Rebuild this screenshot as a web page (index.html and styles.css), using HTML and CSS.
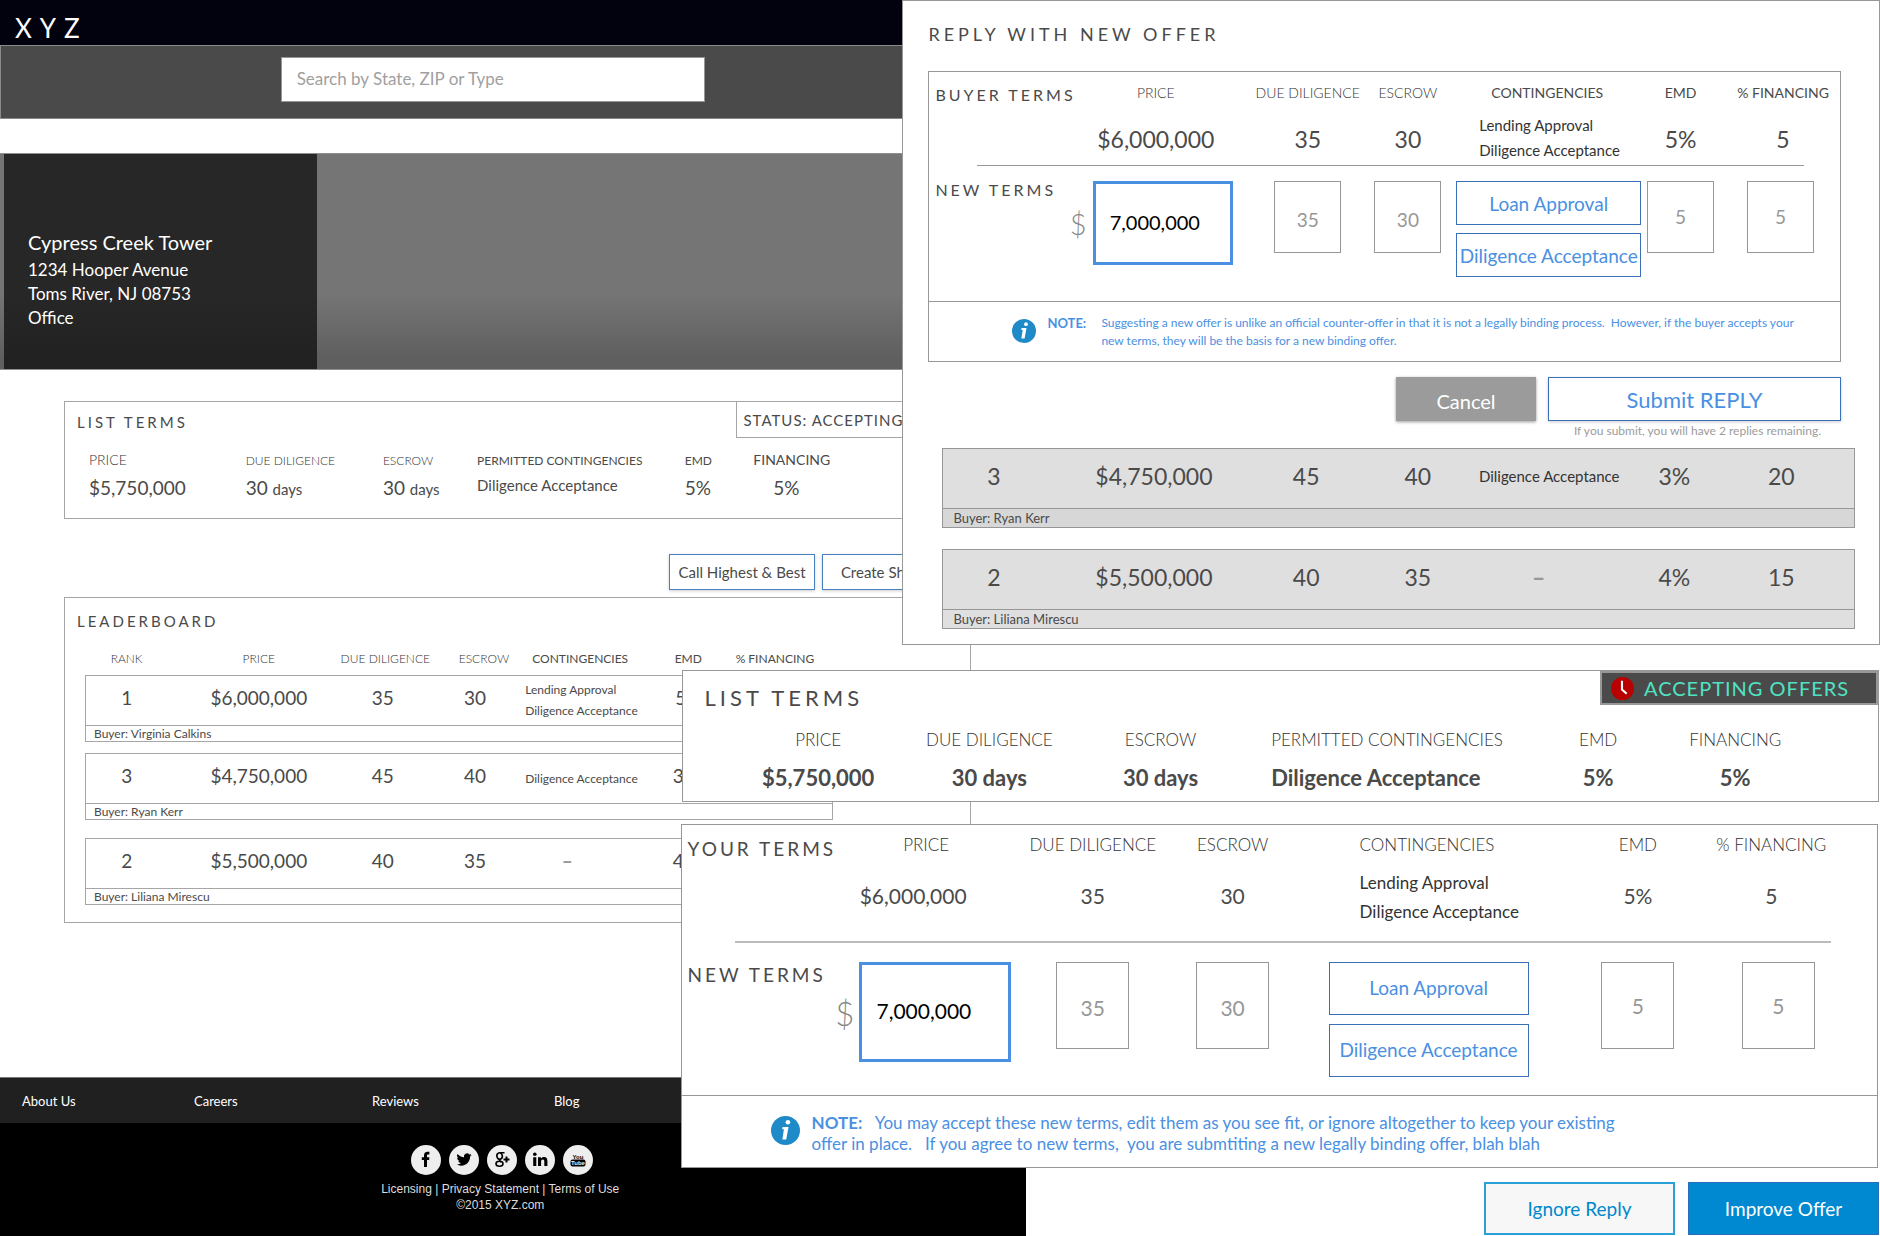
FILE: index.html
```
<!DOCTYPE html>
<html lang="en">
<head>
<meta charset="utf-8">
<title>XYZ – Cypress Creek Tower</title>
<link rel="stylesheet" href="styles.css">
</head>
<body>
<div class="page">
  <header>
    <div class="topbar"><a class="brand" href="#">XYZ</a></div>
    <form class="searchbar"><input class="search" type="search" placeholder="Search by State, ZIP or Type" aria-label="Search by State, ZIP or Type"></form>
  </header>
  <main class="content">
    <section class="hero">
      <address class="property">
        <strong class="property-name">Cypress Creek Tower</strong>
        <span>1234 Hooper Avenue</span>
        <span>Toms River, NJ 08753</span>
        <span>Office</span>
      </address>
    </section>

    <section class="card list-card">
      <div class="card-head"><h2 class="card-title">LIST TERMS</h2><span class="status">STATUS: ACCEPTING OFFERS</span></div>
      <table class="summary">
        <colgroup><col class="s-price"><col class="s-due"><col class="s-escrow"><col class="s-cont"><col class="s-emd"><col></colgroup>
        <thead><tr><th class="big">PRICE</th><th>DUE DILIGENCE</th><th>ESCROW</th><th class="med">PERMITTED CONTINGENCIES</th><th class="med">EMD</th><th class="big med">FINANCING</th></tr></thead>
        <tbody><tr><td>$5,750,000</td><td>30 <small>days</small></td><td>30 <small>days</small></td><td class="raised"><small>Diligence Acceptance</small></td><td>5%</td><td class="indent">5%</td></tr></tbody>
      </table>
    </section>

    <div class="page-actions"><button class="outline-button" type="button">Call Highest &amp; Best</button><button class="outline-button wide" type="button">Create Short List</button></div>

    <section class="card">
      <h2 class="card-title leader-title">LEADERBOARD</h2>
      <table class="offers small-offers">
        <colgroup><col class="l-rank"><col class="l-price"><col class="l-due"><col class="l-escrow"><col class="l-cont"><col class="l-emd"><col class="l-fin"></colgroup>
        <thead><tr><th class="rank">RANK</th><th>PRICE</th><th class="due-head">DUE DILIGENCE</th><th class="escrow-head">ESCROW</th><th class="left med cont-head">CONTINGENCIES</th><th class="med">EMD</th><th class="med fin-head">% FINANCING</th></tr></thead>
        <tbody>
          <tr class="offer"><td class="rank">1</td><td>$6,000,000</td><td>35</td><td class="escrow">30</td><td class="left terms">Lending Approval<br>Diligence Acceptance</td><td>5%</td><td></td></tr>
          <tr class="buyer"><td colspan="7">Buyer: Virginia Calkins</td></tr>
          <tr class="gap"><td colspan="7"></td></tr>
          <tr class="offer"><td class="rank">3</td><td>$4,750,000</td><td>45</td><td class="escrow">40</td><td class="left terms">Diligence Acceptance</td><td class="emd">3%</td><td></td></tr>
          <tr class="buyer"><td colspan="7">Buyer: Ryan Kerr</td></tr>
          <tr class="gap tall"><td colspan="7"></td></tr>
          <tr class="offer"><td class="rank">2</td><td>$5,500,000</td><td>40</td><td class="escrow">35</td><td class="none">–</td><td class="emd">4%</td><td></td></tr>
          <tr class="buyer"><td colspan="7">Buyer: Liliana Mirescu</td></tr>
        </tbody>
      </table>
    </section>
  </main>
  <footer>
    <nav class="footer-nav"><a href="#">About Us</a><a href="#">Careers</a><a href="#">Reviews</a><a href="#">Blog</a></nav>
    <div class="legal">
      <div class="social">
        <a href="#" aria-label="Facebook"><svg viewBox="0 0 30 30"><circle cx="15" cy="15" r="15" fill="#eee"/><path d="M13 22v-7h-2.200v-2.800H13v-1.700c0-2.600 1.300-3.800 3.600-3.800h1.800v2.800h-1.200c-.9 0-1.200.4-1.200 1.200v1.500h2.400l-.3 2.800H16v7z"/></svg></a>
        <a href="#" aria-label="Twitter"><svg viewBox="0 0 30 30"><circle cx="15" cy="15" r="15" fill="#eee"/><path transform="translate(7.500 8) scale(.63)" d="M24 3c-.9.400-1.800.700-2.800.800 1-.6 1.800-1.600 2.200-2.700-1 .6-2 1-3.100 1.200A4.900 4.900 0 0 0 11.900 6.800C7.800 6.600 4.200 4.600 1.700 1.600A4.900 4.900 0 0 0 3.200 8.200c-.8 0-1.600-.2-2.200-.6 0 2.300 1.600 4.400 3.900 4.900-.7.200-1.500.2-2.200.1a4.900 4.900 0 0 0 4.600 3.400A9.900 9.900 0 0 1 0 18a14 14 0 0 0 7.500 2.200c9.100 0 14.300-7.700 14-14.600 1-.7 1.800-1.600 2.500-2.600z"/></svg></a>
        <a href="#" aria-label="Google Plus"><svg viewBox="0 0 30 30"><circle cx="15" cy="15" r="15" fill="#eee"/><g fill="none" stroke="#000" stroke-width="1.600"><ellipse cx="12.600" cy="11" rx="2.700" ry="3.200" transform="rotate(-15 12.600 11)"/><path d="M13 7.800h4.500M13.500 14.200c-1.500 1.300-1 1.800.5 2.800"/><ellipse cx="12.500" cy="18.800" rx="3.500" ry="2.500"/><path d="M19.500 11.500v6M16.500 14.500h6" stroke-width="2"/></g></svg></a>
        <a href="#" aria-label="LinkedIn"><svg viewBox="0 0 30 30"><circle cx="15" cy="15" r="15" fill="#eee"/><circle cx="9.800" cy="9.300" r="1.800"/><path d="M8.200 12.200h3.100V21H8.200zM13 12.200h3v1.300c.6-.9 1.600-1.500 3-1.500 2.500 0 3.400 1.600 3.400 4.100V21h-3.100v-4.400c0-1.200-.3-2-1.400-2s-1.800.8-1.800 2V21H13z"/></svg></a>
        <a href="#" aria-label="YouTube"><svg viewBox="0 0 30 30"><circle cx="15" cy="15" r="15" fill="#eee"/><rect x="7.500" y="14.500" width="15" height="7" rx="2"/><text class="yt" x="15" y="13.500">You</text><text class="yt" x="15" y="20.300" fill="#eee">Tube</text></svg></a>
      </div>
      <p><a href="#">Licensing</a> | <a href="#">Privacy Statement</a> | <a href="#">Terms of Use</a></p>
      <p>©2015 XYZ.com</p>
    </div>
  </footer>
</div>

<section class="panel reply">
  <h2 class="reply-title">REPLY WITH NEW OFFER</h2>
  <form class="terms-box">
    <table class="edit">
      <colgroup><col class="r-label"><col class="r-price"><col class="r-due"><col class="r-escrow"><col class="r-cont"><col class="r-emd"><col class="r-fin"></colgroup>
      <thead><tr><th class="row-label">BUYER TERMS</th><th class="price">PRICE</th><th>DUE DILIGENCE</th><th>ESCROW</th><th class="med">CONTINGENCIES</th><th class="med">EMD</th><th class="med fin">% FINANCING</th></tr></thead>
      <tbody>
        <tr class="current"><td></td><td class="price">$6,000,000</td><td>35</td><td>30</td><td class="left terms">Lending Approval<br>Diligence Acceptance</td><td>5%</td><td class="fin">5</td></tr>
        <tr class="rule"><td colspan="7"><hr></td></tr>
        <tr class="new"><th class="row-label">NEW TERMS<label class="dollar" for="reply-price">$</label></th><td class="left price-cell"><input class="price-input" id="reply-price" value="7,000,000"></td><td><input class="box" value="35" aria-label="Due diligence"></td><td><input class="box" value="30" aria-label="Escrow"></td><td class="left choices"><button class="choice" type="button">Loan Approval</button><button class="choice" type="button">Diligence Acceptance</button></td><td><input class="box up" value="5" aria-label="EMD"></td><td class="fin-cell"><input class="box up" value="5" aria-label="% Financing"></td></tr>
      </tbody>
    </table>
    <div class="note">
      <svg class="info" viewBox="0 0 24 24"><circle cx="12" cy="12" r="12" fill="#1e8ac8"/><circle cx="14" cy="5.200" r="1.900" fill="#fff"/><path d="M9.600 9h4.900l-1.900 10.500H9.400l1.300-8.600H9.300z" fill="#fff"/></svg>
      <strong>NOTE:</strong>
      <p>Suggesting a new offer is unlike an official counter-offer in that it is not a legally binding process.&nbsp; However, if the buyer accepts your new terms, they will be the basis for a new binding offer.</p>
    </div>
  </form>
  <div class="reply-actions">
    <button class="cancel" type="button">Cancel</button>
    <div class="submit-group"><button class="submit" type="button">Submit REPLY</button><span class="hint">If you submit, you will have 2 replies remaining.</span></div>
  </div>
  <table class="offers gray-offers">
    <colgroup><col class="g-rank"><col class="g-price"><col class="g-due"><col class="g-escrow"><col class="g-cont"><col class="g-emd"><col class="g-fin"></colgroup>
    <tbody>
      <tr class="offer"><td class="rank">3</td><td>$4,750,000</td><td>45</td><td>40</td><td class="left terms">Diligence Acceptance</td><td>3%</td><td>20</td></tr>
      <tr class="buyer dark"><td colspan="7">Buyer: Ryan Kerr</td></tr>
      <tr class="gap"><td colspan="7"></td></tr>
      <tr class="offer"><td class="rank">2</td><td>$5,500,000</td><td>40</td><td>35</td><td class="none">–</td><td>4%</td><td>15</td></tr>
      <tr class="buyer"><td colspan="7">Buyer: Liliana Mirescu</td></tr>
    </tbody>
  </table>
</section>

<div class="negotiation">
  <section class="panel list-panel">
    <div class="list-head"><h2 class="list-title">LIST TERMS</h2>
      <span class="badge"><svg viewBox="0 0 22 22"><circle cx="11" cy="11" r="11" fill="#b80000"/><path d="M10.500 3.500v8.500l4.500 4" fill="none" stroke="#fff" stroke-width="2"/></svg>ACCEPTING OFFERS</span></div>
    <table class="list-table">
      <colgroup><col class="t-std"><col class="t-std"><col class="t-std"><col class="t-cont"><col class="t-end"><col class="t-end"></colgroup>
      <thead><tr><th>PRICE</th><th>DUE DILIGENCE</th><th>ESCROW</th><th class="left">PERMITTED CONTINGENCIES</th><th>EMD</th><th>FINANCING</th></tr></thead>
      <tbody><tr><td>$5,750,000</td><td>30 days</td><td>30 days</td><td class="left">Diligence Acceptance</td><td>5%</td><td>5%</td></tr></tbody>
    </table>
  </section>
  <form class="panel your-panel">
    <table class="edit">
      <colgroup><col class="y-label"><col class="y-price"><col class="y-due"><col class="y-escrow"><col class="y-cont"><col class="y-emd"><col class="y-fin"></colgroup>
      <thead><tr><th class="row-label">YOUR TERMS</th><th class="price">PRICE</th><th>DUE DILIGENCE</th><th>ESCROW</th><th class="left terms-col">CONTINGENCIES</th><th>EMD</th><th class="fin">% FINANCING</th></tr></thead>
      <tbody>
        <tr class="current"><td></td><td class="price">$6,000,000</td><td>35</td><td>30</td><td class="left terms terms-col">Lending Approval<br>Diligence Acceptance</td><td>5%</td><td class="fin">5</td></tr>
        <tr class="rule"><td colspan="7"><hr></td></tr>
        <tr class="new"><th class="row-label">NEW TERMS<label class="dollar" for="your-price">$</label></th><td class="left price-cell"><input class="price-input" id="your-price" value="7,000,000"></td><td><input class="box" value="35" aria-label="Due diligence"></td><td><input class="box" value="30" aria-label="Escrow"></td><td class="left choices"><button class="choice" type="button">Loan Approval</button><button class="choice" type="button">Diligence Acceptance</button></td><td><input class="box up" value="5" aria-label="EMD"></td><td class="fin-cell"><input class="box up" value="5" aria-label="% Financing"></td></tr>
      </tbody>
    </table>
    <div class="note">
      <svg class="info" viewBox="0 0 24 24"><circle cx="12" cy="12" r="12" fill="#1e8ac8"/><circle cx="14" cy="5.200" r="1.900" fill="#fff"/><path d="M9.600 9h4.900l-1.900 10.500H9.400l1.300-8.600H9.300z" fill="#fff"/></svg>
      <p><strong>NOTE:</strong>&nbsp;&nbsp; You may accept these new terms, edit them as you see fit, or ignore altogether to keep your existing<br>offer in place.&nbsp;&nbsp; If you agree to new terms,&nbsp; you are submtiting a new legally binding offer, blah blah</p>
    </div>
  </form>
  <div class="final-actions"><button class="ignore" type="button">Ignore Reply</button><button class="improve" type="button">Improve Offer</button></div>
</div>
</body>
</html>
```
FILE: styles.css
```
* { box-sizing: border-box; }
body {
  margin: 0;
  position: relative;
  min-height: 100vh;
  background: #fff;
  color: #4a4a4a;
  font-family: Lato, "Liberation Sans", sans-serif;
  font-size: 16px;
}
button, input { font: inherit; margin: 0; border-radius: 0; }
a { color: inherit; text-decoration: none; }
h2, p { margin: 0; font-weight: 400; }
table { border-collapse: collapse; table-layout: fixed; width: 100%; }
th, td { padding: 0; font-weight: 400; text-align: center; white-space: nowrap; }
th { color: #333; font-weight: 300; }
.med { color: #4a4a4a; font-weight: 400; }
.left { text-align: left; }

/* Property page */
.page { width: 54.6%; min-height: 100vh; display: flex; flex-direction: column; }
.topbar { height: 45px; padding: 10px 15px; background: #02020f; }
.brand { color: #fff; font-size: 26px; line-height: 36px; letter-spacing: 8px; }
.searchbar { height: 74px; padding-top: 11px; background: #4a4a4a; border: 1px solid #8a8a8a; }
.search { display: block; width: 41.400%; height: 45px; margin-left: 27.300%; padding: 0 15px 2px; border: 1px solid #979797; background: #fff; color: #4a4a4a; font-size: 17px; appearance: none; }
.search::placeholder { color: #a0a0a0; opacity: 1; }
.content { flex: 1; }
.hero { height: 217px; margin-top: 34px; padding-left: 4px; background: linear-gradient(#757575 0 65%, #5f5f5f 95%); border: 1px solid #8f8f8f; border-width: 1px 0; }
.property { display: flex; flex-direction: column; width: 313px; height: 100%; padding: 74px 0 0 24px; background: linear-gradient(#272727 0 65%, #212121); color: #fff; font-style: normal; font-size: 17px; line-height: 24px; }
.property-name { margin-bottom: 2px; font-size: 20px; font-weight: 400; line-height: 28px; }
.card { margin: 31px 55px 0 64px; border: 1px solid #a6a6a6; background: #fff; }
.list-card { height: 118px; }
.card-head { display: flex; justify-content: space-between; height: 46px; }
.card-title { padding-left: 12px; font-size: 15px; line-height: 41px; letter-spacing: 3px; }
.status { width: 234px; height: 36px; padding-left: 6px; border: 1px solid #a6a6a6; border-width: 0 0 1px 1px; font-size: 15px; line-height: 36px; letter-spacing: 1px; white-space: nowrap; }
.summary { margin-left: 24px; width: 880px; }
.summary th, .summary td { text-align: left; vertical-align: baseline; }
.summary th { font-size: 12px; line-height: 24px; }
.summary th.big { font-size: 14px; }
.summary td { font-size: 19px; line-height: 30px; }
.summary small { font-size: 15px; }
.summary .raised { line-height: 22px; vertical-align: top; }
.summary .indent { padding-left: 20px; }
.s-price { width: 17.800%; } .s-due { width: 15.600%; } .s-escrow { width: 10.700%; } .s-cont { width: 23.600%; } .s-emd { width: 7.800%; }
.page-actions { display: flex; gap: 7px; margin: 35px 55px -24px 669px; }
.outline-button { flex: none; width: 146px; height: 36px; padding: 0; border: 1px solid #4a7fc0; background: #fff; color: #4a4a4a; font-size: 15px; box-shadow: 0 1px 3px rgba(0, 0, 0, .2); }
.outline-button.wide { width: 148px; }
.leader-title { line-height: 46px; }
.small-offers { margin: 4px 135px 17px 20px; width: 748px; }

/* Offer rows */
.offer, .buyer { border: 1px solid #a6a6a6; }
.small-offers th { height: 27px; padding-bottom: 5px; font-size: 12px; }
.small-offers .rank { padding-right: 15px; }
.small-offers .due-head { padding-left: 5px; }
.small-offers .escrow-head { padding-left: 14px; }
.small-offers .cont-head { padding-left: 9px; }
.small-offers .fin-head { padding-right: 6px; }
.small-offers .escrow { padding-right: 4px; }
.small-offers .emd { padding-right: 5px; }
.small-offers .offer { height: 50px; }
.small-offers .offer td { font-size: 19px; line-height: 21px; padding-bottom: 6px; }
.small-offers .offer .terms { padding-left: 2px; font-size: 12px; padding-bottom: 0; }
.small-offers .buyer { height: 15px; }
.small-offers .buyer td { padding-left: 8px; font-size: 12px; line-height: 15px; text-align: left; }
.small-offers .gap { height: 12px; }
.small-offers .gap.tall { height: 19px; }
.offers .none { color: #979797; font-weight: 900; padding-right: 42px; }
.l-rank { width: 13%; } .l-price { width: 20.400%; } .l-due { width: 12.800%; } .l-escrow { width: 12.400%; } .l-cont { width: 17.400%; } .l-emd { width: 9.400%; } .l-fin { width: 14.600%; }

/* Footer */
.footer-nav { display: flex; gap: 116px; height: 46px; padding-left: 22px; border-top: 1px solid #777; background: #202020; color: #fff; font-size: 13px; line-height: 46px; }
.footer-nav a { min-width: 56px; }
.footer-nav a:nth-child(2) { min-width: 62px; }
.footer-nav a:nth-child(3) { min-width: 66px; }
.legal { height: 113px; padding: 22px 26px 0 0; background: #000; color: #ddd; font-family: "Liberation Sans", Arial, sans-serif; font-size: 12px; line-height: 16px; text-align: center; }
.social { display: flex; justify-content: center; gap: 8px; margin-bottom: 6px; padding-left: 4px; }
.social svg { display: block; width: 30px; height: 30px; }
.yt { font: bold 6px "Liberation Sans", sans-serif; text-anchor: middle; }

/* Panels over the page */
.panel { border: 1px solid #979797; background: #fff; }
.reply { position: absolute; top: 0; left: 48%; right: 0; height: 645px; padding: 0 38px 0 25px; }
.reply-title { height: 70px; padding-top: 20px; font-size: 18px; line-height: 26px; letter-spacing: 4px; }
.terms-box { border: 1px solid #979797; }
.row-label { padding-left: 6px; color: #4a4a4a; text-align: left; font-weight: 400; letter-spacing: 3px; }
.note { display: flex; border-top: 1px solid #979797; color: #4a90e2; }
.info { flex: none; }
.price-input { display: block; border: 3px solid #4a90e2; background: #fff; color: #000; outline: 0; }
.box { display: block; margin: 0 auto; padding: 4px 0 0; border: 1px solid #979797; background: #fff; color: #979797; text-align: center; }
.box.up { padding: 0 0 1px; }
.choice { display: block; padding: 0; border: 1px solid #3a70b8; background: #fff; color: #4a90e2; }
.new > * { vertical-align: top; }
.dollar { display: block; text-align: right; color: #888; letter-spacing: 0; font-weight: 300; }
hr { margin: 0; border: 0; }
.edit .terms { color: #333; }

.reply .edit th { height: 41px; font-size: 14px; }
.reply .edit .row-label { font-size: 16px; padding-top: 4px; }
.reply .price { padding-right: 28px; }
.reply .fin { padding-left: 9px; }
.reply .fin-cell { padding-left: 4px; }
.reply .current td { height: 52px; font-size: 23px; }
.reply .current .terms { padding: 0 0 2px 29px; font-size: 15px; line-height: 25px; }
.reply hr { height: 1px; margin: 0 36px 0 48px; background: #979797; }
.reply .new > * { height: 135px; padding-top: 15px; }
.reply .edit .new .row-label { padding-top: 13px; line-height: 22px; }
.reply .dollar { padding: 6px 3px 0 0; font-size: 29px; line-height: 34px; }
.reply .price-cell { padding-left: 3px; }
.reply .price-input { width: 140px; height: 84px; padding: 0 14px 3px; font-size: 20px; }
.reply .box { width: 67px; height: 72px; font-size: 19px; }
.reply .choices { padding-left: 6px; }
.reply .choice { width: 185px; height: 44px; margin-bottom: 8px; font-size: 19px; }
.reply .note { height: 60px; padding: 12px 24px 0 83px; font-size: 12px; line-height: 18px; }
.reply .info { width: 24px; height: 24px; margin-top: 5px; }
.reply .note strong { flex: none; width: 54px; margin-left: 11px; font-size: 13px; }
.r-label { width: 17.600%; } .r-price { width: 17.600%; } .r-due { width: 12.700%; } .r-escrow { width: 9.300%; } .r-cont { width: 21.300%; } .r-emd { width: 8%; } .r-fin { width: 13.500%; }
.reply-actions { display: flex; justify-content: flex-end; gap: 12px; height: 79px; padding-top: 15px; }
.cancel { width: 140px; height: 44px; padding: 4px 0 0; border: 0; background: #9b9b9b; color: #fff; font-size: 20px; box-shadow: 0 1px 3px rgba(0, 0, 0, .4); }
.submit-group { display: flex; flex-direction: column; width: 293px; }
.submit { flex: none; height: 44px; padding: 0; border: 1px solid #3a70b8; background: #fff; color: #4a90e2; font-size: 22px; box-shadow: 0 1px 3px rgba(0, 0, 0, .2); }
.hint { padding-right: 20px; color: #9b9b9b; font-size: 12px; line-height: 20px; text-align: right; }
.gray-offers { position: relative; left: 14px; margin-top: 7px; }
.gray-offers .offer, .gray-offers .buyer { border-color: #979797; background: #dfdfdf; }
.gray-offers .buyer.dark { background: #d7d7d7; }
.gray-offers .offer { height: 60px; }
.gray-offers .offer td { padding-bottom: 5px; font-size: 23px; }
.gray-offers .offer .terms { color: #333; font-size: 15px; }
.gray-offers .rank { padding-right: 8px; }
.gray-offers .buyer { height: 19px; }
.gray-offers .buyer td { padding-left: 10px; font-size: 13px; line-height: 18px; text-align: left; }
.gray-offers .gap { height: 22px; }
.g-rank { width: 12%; } .g-price { width: 22.300%; } .g-due { width: 11.100%; } .g-escrow { width: 13.400%; } .g-cont { width: 17.700%; } .g-emd { width: 7.500%; } .g-fin { width: 16%; }

.negotiation { position: absolute; top: 670px; left: 36.200%; right: 1px; }
.list-panel { height: 132px; margin-left: 1px; }
.list-head { display: flex; justify-content: space-between; height: 54px; }
.list-title { padding-left: 22px; font-size: 22px; line-height: 54px; letter-spacing: 4px; }
.badge { display: flex; align-items: center; gap: 10px; width: 278px; height: 34px; padding-left: 9px; border: 2px solid #979797; background: #4a4a4a; color: #50e3c2; font-size: 20px; letter-spacing: 1px; }
.badge svg { flex: none; width: 23px; height: 23px; }
.list-table { width: 89.600%; margin-left: 50px; }
.list-table th { height: 28px; font-size: 17px; }
.list-table td { height: 48px; font-size: 22px; font-weight: 700; }
.list-table .left { padding-left: 25px; }
.t-std { width: 16%; } .t-cont { width: 26.500%; } .t-end { width: 12.800%; }
.your-panel { height: 344px; margin: 22px 1px 0 0; }
.your-panel .edit th { height: 39px; font-size: 17px; }
.your-panel .edit .row-label { padding-top: 8px; font-size: 19px; }
.your-panel th.price { padding-right: 26px; }
.your-panel td.price { padding-right: 52px; }
.your-panel .fin { padding-right: 44px; }
.your-panel .fin-cell { padding-right: 30px; }
.your-panel .terms-col { padding-left: 60px; }
.your-panel .current td { height: 77px; padding-bottom: 14px; font-size: 21px; }
.your-panel .current .terms { font-size: 17px; line-height: 29px; padding-bottom: 12px; }
.your-panel hr { height: 2px; margin: 0 46px 0 53px; background: #bcbcbc; }
.your-panel .new > * { height: 152px; padding-top: 19px; }
.your-panel .edit .new .row-label { padding-top: 20px; line-height: 24px; }
.your-panel .dollar { padding: 2px 4px 0 0; font-size: 33px; line-height: 48px; }
.your-panel .price-cell { padding-left: 1px; }
.your-panel .price-input { width: 152px; height: 100px; padding: 0 14px 3px; font-size: 21px; }
.your-panel .box { width: 73px; height: 87px; font-size: 21px; }
.your-panel .choices { padding-left: 29px; }
.your-panel .choice { width: 200px; height: 53px; margin-bottom: 9px; padding-bottom: 3px; font-size: 19px; }
.your-panel .note { padding: 16px 0 0 89px; font-size: 17px; line-height: 21px; }
.your-panel .info { width: 29px; height: 29px; margin: 4px 12px 0 0; }
.your-panel .note p { white-space: nowrap; }
.y-label { width: 14.800%; } .y-price { width: 13.500%; } .y-due { width: 12.200%; } .y-escrow { width: 11.200%; } .y-cont { width: 22.300%; } .y-emd { width: 12%; } .y-fin { width: 14%; }
.final-actions { display: flex; justify-content: flex-end; gap: 13px; padding-top: 14px; }
.final-actions button { width: 191px; height: 53px; font-size: 19px; }
.ignore { border: 2px solid #2a9fd8; background: #f7f7f7; color: #0088cc; }
.improve { border: 1px solid #2a6ebb; background: #0088d0; color: #fff; }
```
